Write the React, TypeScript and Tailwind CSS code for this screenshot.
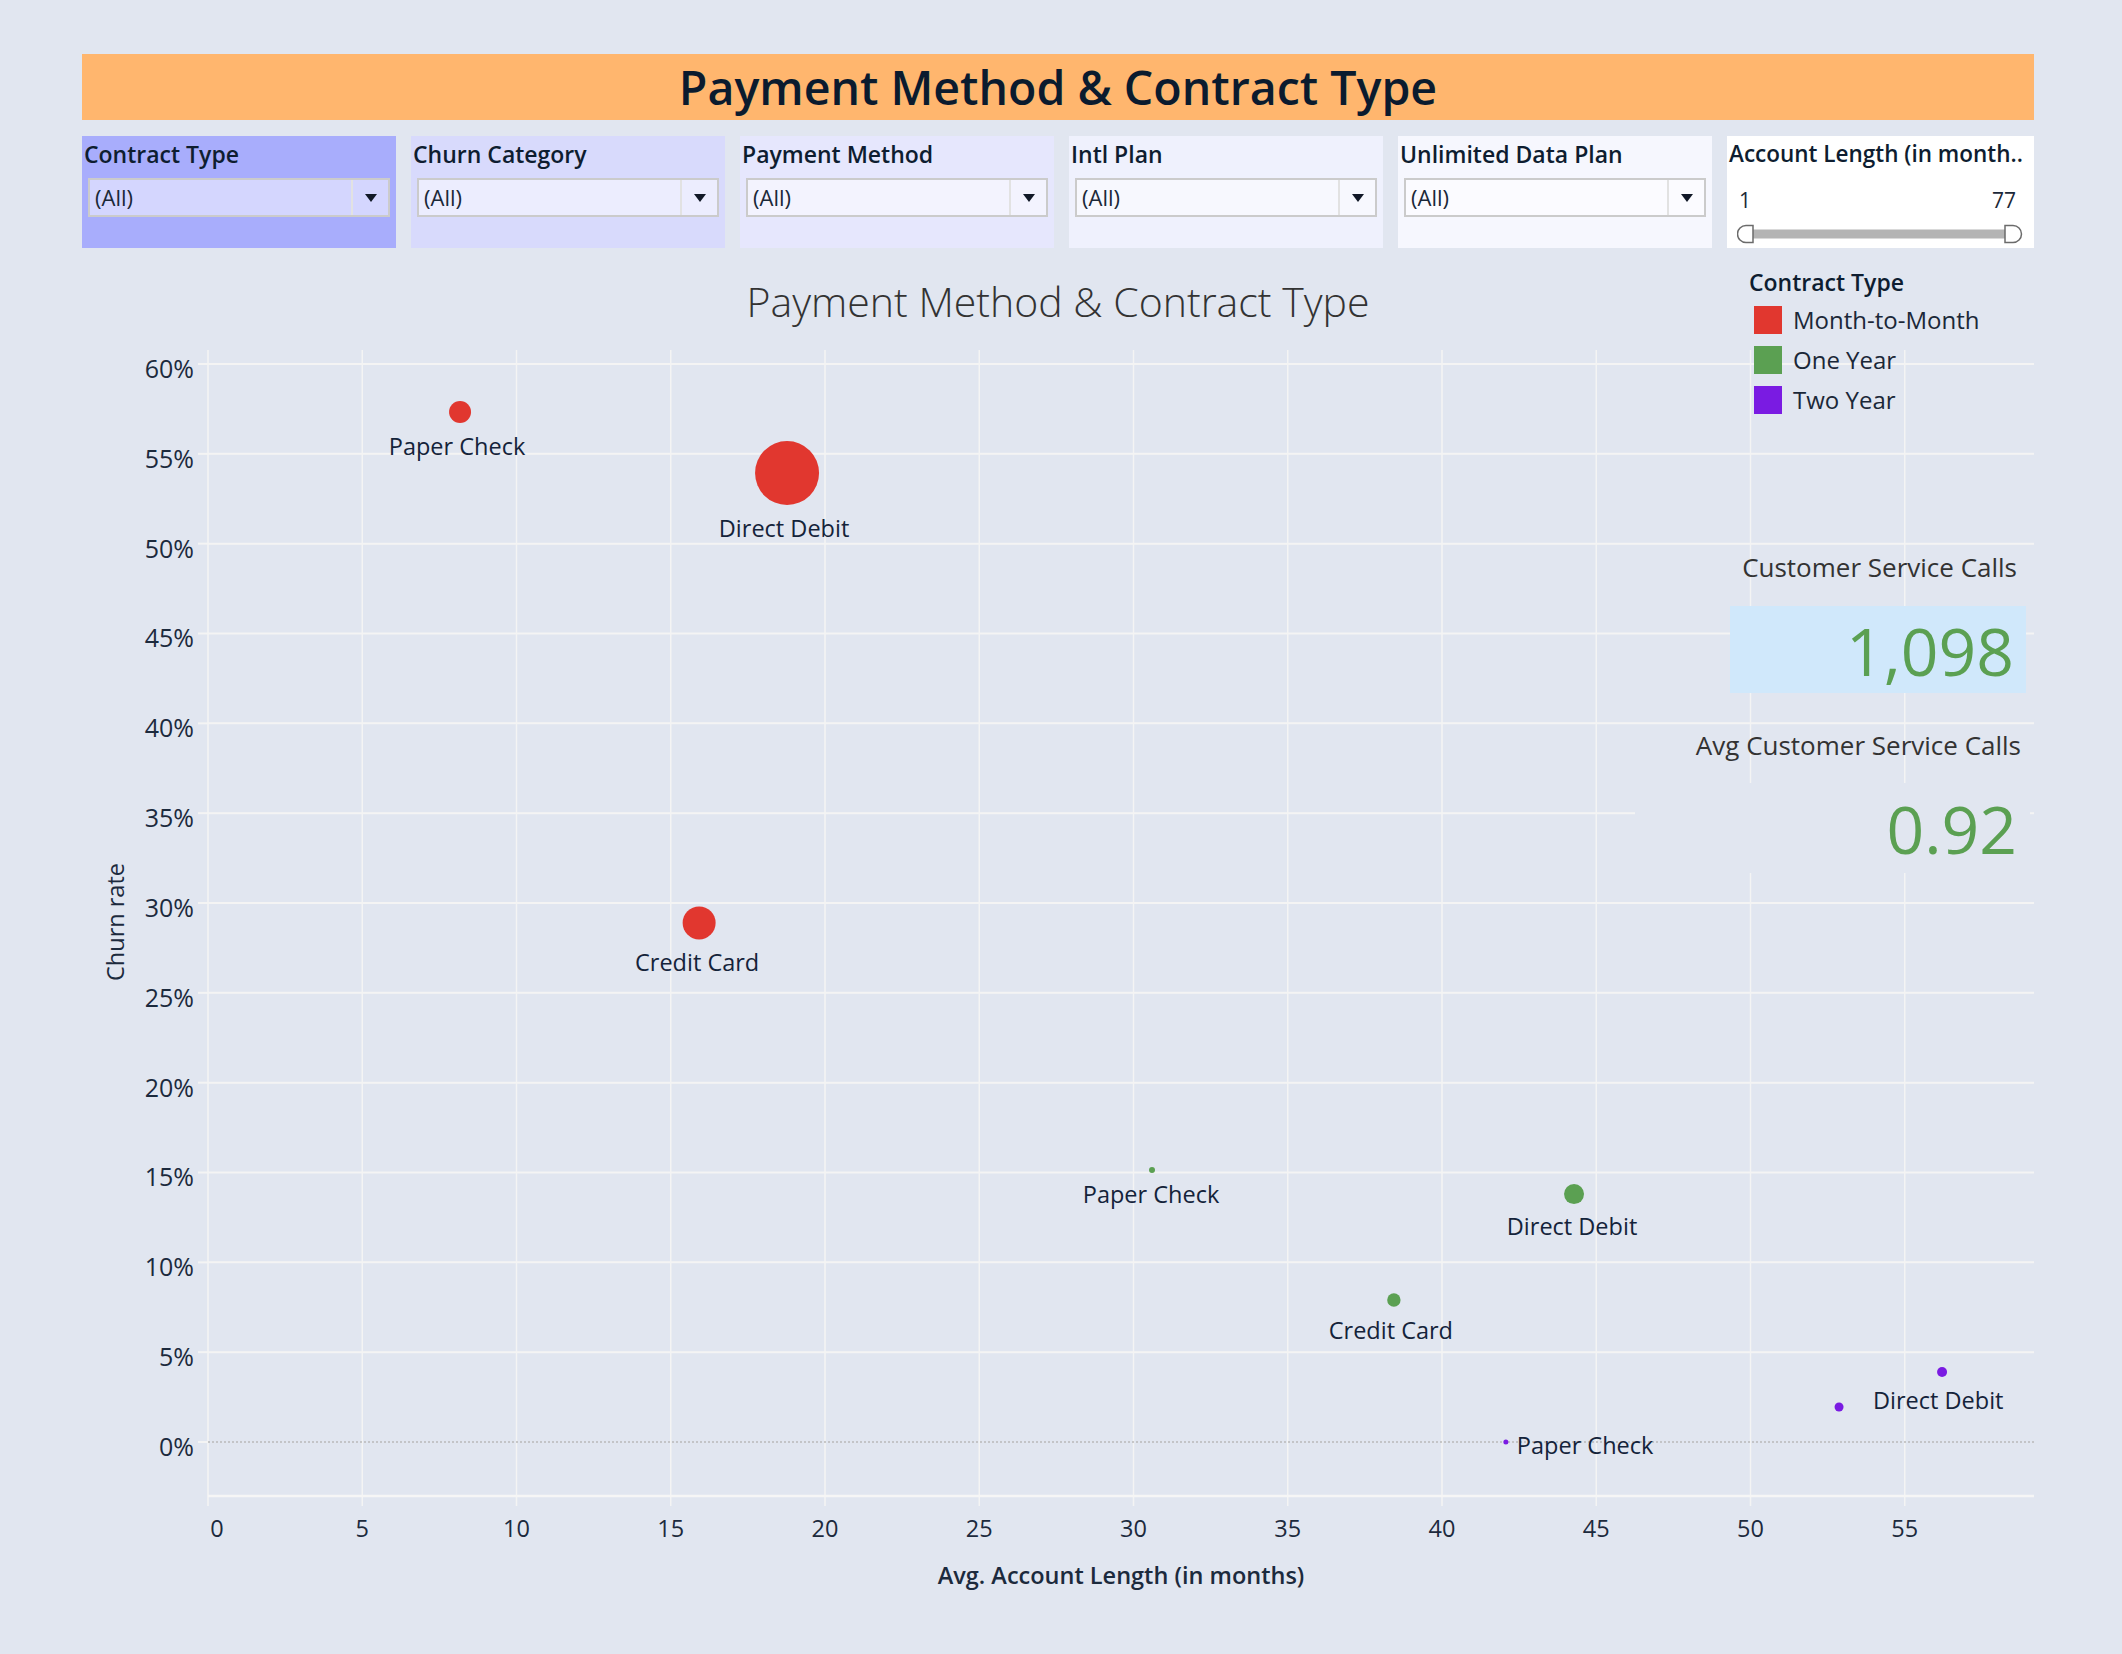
const RED = '#e1372f';
const GREEN = '#5ba052';
const PURPLE = '#7a1be2';

// plot geometry (svg local coords, before the 10px top pad)
const PLOT_LEFT = 126;
const PLOT_RIGHT = 1952;
const PLOT_BOTTOM = 1146;
const X_STEP = 30.85; // px per month
const Y_STEP = 17.967; // px per percent
const xPos = (m: number) => PLOT_LEFT + m * X_STEP;
const yPos = (p: number) => 1092 - p * Y_STEP;

interface Point {
  color: string;
  name: string;
  months: number;
  churn: number;
  r: number;
  lx?: number;
  ly?: number;
  anchor?: 'start' | 'middle';
}

const points: Point[] = [
  { color: RED, name: 'Paper Check', months: 8.17, churn: 57.33, r: 11, lx: -3, ly: 34 },
  { color: RED, name: 'Direct Debit', months: 18.77, churn: 53.93, r: 32, lx: -3, ly: 55 },
  { color: RED, name: 'Credit Card', months: 15.92, churn: 28.89, r: 16.5, lx: -2, ly: 39 },
  { color: GREEN, name: 'Paper Check', months: 30.6, churn: 15.14, r: 3, lx: -1, ly: 24 },
  { color: GREEN, name: 'Direct Debit', months: 44.28, churn: 13.8, r: 10, lx: -2, ly: 32 },
  { color: GREEN, name: 'Credit Card', months: 38.44, churn: 7.9, r: 6.7, lx: -3, ly: 30 },
  { color: PURPLE, name: '', months: 56.21, churn: 3.9, r: 5 },
  { color: PURPLE, name: 'Direct Debit', months: 52.87, churn: 1.95, r: 4.5, lx: 34, ly: -7, anchor: 'start' },
  { color: PURPLE, name: 'Paper Check', months: 42.07, churn: 0, r: 2.5, lx: 11, ly: 3, anchor: 'start' },
];

const filters = [
  { label: 'Contract Type', bg: 'bg-[#a8adfc]' },
  { label: 'Churn Category', bg: 'bg-[#d8dafc]' },
  { label: 'Payment Method', bg: 'bg-[#e6e7fd]' },
  { label: 'Intl Plan', bg: 'bg-[#eff1fd]' },
  { label: 'Unlimited Data Plan', bg: 'bg-[#f6f7fe]' },
];

const legend = [
  { label: 'Month-to-Month', swatch: 'bg-[#e1372f]' },
  { label: 'One Year', swatch: 'bg-[#5ba052]' },
  { label: 'Two Year', swatch: 'bg-[#7a1be2]' },
];

function Dropdown() {
  return (
    <div className="mx-[6px] mt-[10px] h-[39px] border-2 border-[#cbcbcb] bg-white/50 flex">
      <div className="flex-1 flex items-center pl-[5px] text-[22px] text-[#1b2838]">(All)</div>
      <div className="w-[37px] border-l-2 border-[#e2e2e2] flex items-center justify-center">
        <svg width="12" height="8" viewBox="0 0 12 8">
          <polygon points="0,0 12,0 6,8" fill="#111827" />
        </svg>
      </div>
    </div>
  );
}

function SliderFilter() {
  return (
    <div className="flex-1 bg-white pt-[4px]">
      <div className="pl-[2px] text-[22.5px] font-semibold leading-[28px] text-[#0e1d30] whitespace-nowrap">
        Account Length (in month..
      </div>
      <div className="mt-[20px] h-[26px] flex items-center justify-between pl-[12px] pr-[18px] text-[21px] text-[#1b2838]">
        <span>1</span>
        <span>77</span>
      </div>
      <div className="mt-[10px] pl-[10px]">
        <svg width="286" height="20" viewBox="0 0 286 20">
          <rect x="15" y="5.5" width="255" height="9" fill="#b4b4b4" />
          <path d="M16 1.5 H9 A8.5 8.5 0 0 0 9 18.5 H16 Z" fill="#fff" stroke="#6b6b6b" strokeWidth="1.5" />
          <path d="M268 1.5 H276 A8.5 8.5 0 0 1 276 18.5 H268 Z" fill="#fff" stroke="#6b6b6b" strokeWidth="1.5" />
        </svg>
      </div>
    </div>
  );
}

function ScatterPlot() {
  const yTicks = [0, 5, 10, 15, 20, 25, 30, 35, 40, 45, 50, 55, 60];
  const xTicks = [0, 5, 10, 15, 20, 25, 30, 35, 40, 45, 50, 55];

  return (
    <svg width="1952" height="1314" viewBox="0 0 1952 1314" className="block">
      <g transform="translate(0 10)">
        {/* grid */}
        {yTicks.map((p) =>
          p === 0 ? null : (
            <g key={`h${p}`}>
              <line x1={PLOT_LEFT} x2={PLOT_RIGHT} y1={yPos(p)} y2={yPos(p)} stroke="#f4f4f4" strokeWidth="2" />
              <line x1={PLOT_LEFT - 10} x2={PLOT_LEFT} y1={yPos(p)} y2={yPos(p)} stroke="#f4f4f4" strokeWidth="2" />
            </g>
          )
        )}
        {xTicks.map((m) => (
          <g key={`v${m}`}>
            <line x1={xPos(m)} x2={xPos(m)} y1={0} y2={PLOT_BOTTOM} stroke="#f4f4f4" strokeWidth="1.5" />
            <line x1={xPos(m)} x2={xPos(m)} y1={PLOT_BOTTOM} y2={PLOT_BOTTOM + 10} stroke="#f4f4f4" strokeWidth="1.5" />
          </g>
        ))}
        <line x1={PLOT_LEFT - 10} x2={PLOT_LEFT} y1={yPos(0)} y2={yPos(0)} stroke="#f4f4f4" strokeWidth="2" />
        <line x1={PLOT_LEFT} x2={PLOT_RIGHT} y1={yPos(0)} y2={yPos(0)} stroke="#b9b9b9" strokeWidth="1.5" strokeDasharray="2 2" />
        <line x1={PLOT_LEFT} x2={PLOT_RIGHT} y1={PLOT_BOTTOM} y2={PLOT_BOTTOM} stroke="#f6f6f6" strokeWidth="2.5" />

        {/* axis labels */}
        <g fill="#1c2a3d">
          {yTicks.map((p) => (
            <text key={`yl${p}`} x={112} y={yPos(p) + 4} fontSize="25" textAnchor="end" dominantBaseline="central">
              {p}%
            </text>
          ))}
          {xTicks.map((m) => (
            <text
              key={`xl${m}`}
              x={xPos(m) + (m === 0 ? 9 : 0)}
              y={1178}
              fontSize="23.5"
              textAnchor="middle"
              dominantBaseline="central"
            >
              {m}
            </text>
          ))}
          <text x={33} y={572} fontSize="23.5" textAnchor="middle" dominantBaseline="central" transform="rotate(-90 33 572)">
            Churn rate
          </text>
          <text x={1039} y={1225} fontSize="23.5" textAnchor="middle" dominantBaseline="central" fontWeight="600">
            Avg. Account Length (in months)
          </text>
        </g>

        {/* marks */}
        {points.map((pt, i) => (
          <circle key={`c${i}`} cx={xPos(pt.months)} cy={yPos(pt.churn)} r={pt.r} fill={pt.color} />
        ))}
        <g fill="#14233a" fontSize="23.5">
          {points
            .filter((pt) => pt.name)
            .map((pt, i) => (
              <text
                key={`t${i}`}
                x={xPos(pt.months) + (pt.lx ?? 0)}
                y={yPos(pt.churn) + (pt.ly ?? 0)}
                textAnchor={pt.anchor ?? 'middle'}
                dominantBaseline="central"
              >
                {pt.name}
              </text>
            ))}
        </g>
      </g>
    </svg>
  );
}

export default function App() {
  return (
    <div className="w-[2122px] h-[1654px] bg-[#e1e6f0] pt-[54px] pl-[82px] font-['Open_Sans',sans-serif] text-[#14233a]">
      <div className="w-[1952px]">
        <header className="h-[66px] bg-[#ffb66e] flex items-center justify-center">
          <h1 className="text-[46.5px] font-semibold leading-none text-[#0b1b2e]">Payment Method &amp; Contract Type</h1>
        </header>

        {/* Filters */}
        <div className="mt-[16px] h-[112px] flex gap-[15px]">
          {filters.map((f) => (
            <div key={f.label} className={`w-[314px] pt-[4px] ${f.bg}`}>
              <div className="pl-[2px] text-[23px] font-semibold leading-[28px] text-[#0e1d30]">{f.label}</div>
              <Dropdown />
            </div>
          ))}
          <SliderFilter />
        </div>

        {/* Chart */}
        <section className="relative h-[1406px]">
          <div className="h-[92px] pt-[16px] flex items-center justify-center text-[41px] font-light text-[#333333]">
            Payment Method &amp; Contract Type
          </div>
          <ScatterPlot />

          {/* Legend */}
          <div className="absolute left-[1667px] top-[19px]">
            <div className="text-[23px] font-semibold leading-[30px] text-[#0e1d30]">Contract Type</div>
            <div className="mt-[3px]">
              {legend.map((l) => (
                <div key={l.label} className="h-[40px] flex items-center gap-[11px] pl-[5px]">
                  <span className={`w-[28px] h-[28px] ${l.swatch}`} />
                  <span className="text-[24px] text-[#1b2838]">{l.label}</span>
                </div>
              ))}
            </div>
          </div>

          {/* KPIs */}
          <div className="absolute right-[4px] top-[304px] flex flex-col items-end text-[#333333]">
            <div className="pr-[13px] text-[26px] leading-[30px]">Customer Service Calls</div>
            <div className="mt-[24px] mr-[4px] w-[296px] h-[87px] bg-[#d0e8fb] flex items-center justify-end pr-[12px] text-[66px] leading-none text-[#5ba052]">
              1,098
            </div>
            <div className="mt-[37px] pr-[9px] text-[26px] leading-[30px]">Avg Customer Service Calls</div>
            <div className="mt-[23px] w-[395px] h-[90px] bg-[#e1e6f0] flex items-center justify-end pr-[13px] text-[66px] leading-none text-[#5ba052]">
              0.92
            </div>
          </div>
        </section>
      </div>
    </div>
  );
}
